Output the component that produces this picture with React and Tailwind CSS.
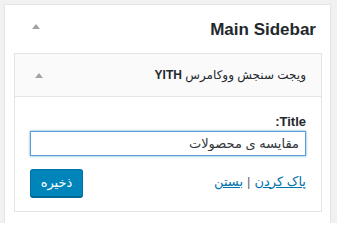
export default function App() {
  const font = { fontFamily: '"Liberation Sans", "DejaVu Sans", sans-serif' }
  return (
    <div className="w-[337px] h-[223px] bg-[#f1f1f1] pt-[4px] pl-[4px] overflow-hidden" style={font}>
      <div className="w-[327px] h-[230px] bg-white border border-[#e5e5e5] shadow-[0_1px_1px_rgba(0,0,0,0.04)]">
        {/* Sidebar header */}
        <div className="h-[48px] flex items-center justify-between pl-[27px] pr-[14px]">
          <span className="w-0 h-0 border-l-[4px] border-r-[4px] border-b-[5px] border-l-transparent border-r-transparent border-b-[#a0a5aa] mb-[5px]" />
          <h2 className="text-[17px] font-bold text-[#23282d] leading-none">Main Sidebar</h2>
        </div>

        {/* Widget */}
        <div className="ml-[9px] w-[308px] border border-[#e5e5e5] bg-white">
          <div className="h-[43px] bg-[#fafafa] border-b border-[#e5e5e5] flex items-center justify-between pl-[20px] pr-[15px]">
            <span className="w-0 h-0 border-l-[4px] border-r-[4px] border-b-[5px] border-l-transparent border-r-transparent border-b-[#a0a5aa]" />
            <h3 dir="rtl" className="text-[12px] font-normal text-[#23282d] leading-none">
              ویجت سنجش ووکامرس <span className="font-bold">YITH</span>
            </h3>
          </div>

          <div dir="rtl" className="px-[15px] pt-[17px] pb-[14px]">
            <label className="block text-[13px] font-bold text-[#23282d] leading-[16px] mb-[1px]">Title:</label>
            <input
              dir="rtl"
              defaultValue="مقایسه ی محصولات"
              className="block w-full h-[25px] px-[6px] border border-[#5b9dd9] shadow-[0_0_2px_rgba(30,140,190,0.8)] text-[13px] text-[#32373c] outline-none bg-white"
              style={font}
            />
            <div className="mt-[13px] flex items-center justify-between">
              <div className="text-[13px] text-[#0073aa] leading-none mb-[4px]">
                <a className="underline">پاک کردن</a>
                <span className="text-[#666] mx-[4px]">|</span>
                <a className="underline">بستن</a>
              </div>
              <button className="w-[53px] h-[28px] rounded-[3px] bg-[#0085ba] border border-[#0073aa] border-b-[#006799] shadow-[0_1px_0_#006799] text-white text-[13px]">
                ذخیره
              </button>
            </div>
          </div>
        </div>
      </div>
    </div>
  )
}
